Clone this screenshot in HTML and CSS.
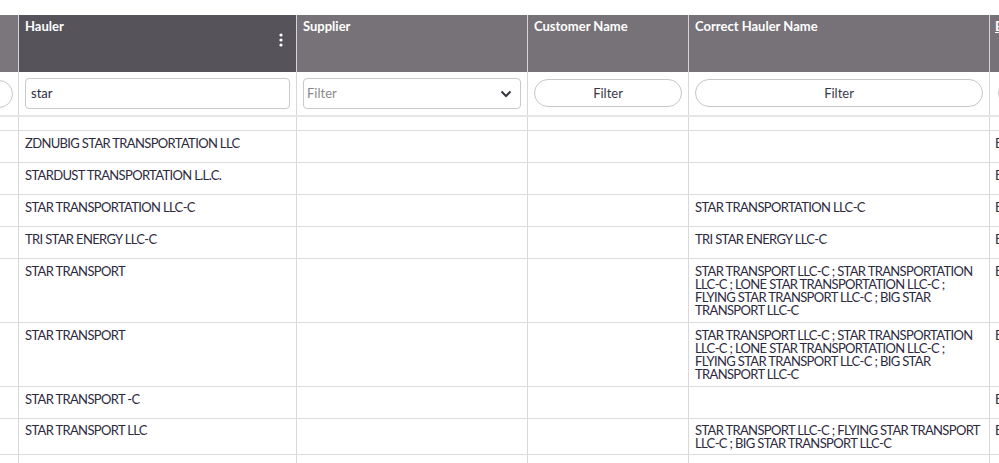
FILE: index.html
```html
<!DOCTYPE html>
<html>
<head>
<meta charset="utf-8">
<link rel="stylesheet" href="styles.css">
</head>
<body>
<div class="grid">
  <div class="row head">
    <div class="cell c0"></div>
    <div class="cell c1 active"><span>Hauler</span>
      <svg class="menu" width="4" height="14" viewBox="0 0 4 14"><circle cx="2" cy="2" r="1.6" fill="#fff"/><circle cx="2" cy="7" r="1.6" fill="#fff"/><circle cx="2" cy="12" r="1.6" fill="#fff"/></svg>
    </div>
    <div class="cell c2">Supplier</div>
    <div class="cell c3">Customer Name</div>
    <div class="cell c4">Correct Hauler Name</div>
    <div class="cell c5"><span class="clip">E</span></div>
  </div>
  <div class="row filters">
    <div class="cell c0"><div class="pill pill-left"></div></div>
    <div class="cell c1"><div class="input">star</div></div>
    <div class="cell c2"><div class="select"><span>Filter</span>
      <svg width="12" height="8" viewBox="0 0 12 8"><path d="M1.5 1.5 L6 6 L10.5 1.5" fill="none" stroke="#3a3640" stroke-width="2"/></svg></div></div>
    <div class="cell c3"><div class="pill">Filter</div></div>
    <div class="cell c4"><div class="pill">Filter</div></div>
    <div class="cell c5"><div class="pill pill-right"></div></div>
  </div>
  <div class="band"></div>
  <div class="row spacer">
    <div class="cell c0"></div><div class="cell c1"></div><div class="cell c2"></div><div class="cell c3"></div><div class="cell c4"></div><div class="cell c5"></div>
  </div>
  <div class="row body">
    <div class="cell c0"></div><div class="cell c1">ZDNUBIG STAR TRANSPORTATION LLC</div><div class="cell c2"></div><div class="cell c3"></div><div class="cell c4"></div><div class="cell c5">E</div>
  </div>
  <div class="row body">
    <div class="cell c0"></div><div class="cell c1">STARDUST TRANSPORTATION L.L.C.</div><div class="cell c2"></div><div class="cell c3"></div><div class="cell c4"></div><div class="cell c5">E</div>
  </div>
  <div class="row body">
    <div class="cell c0"></div><div class="cell c1">STAR TRANSPORTATION LLC-C</div><div class="cell c2"></div><div class="cell c3"></div><div class="cell c4">STAR TRANSPORTATION LLC-C</div><div class="cell c5">E</div>
  </div>
  <div class="row body">
    <div class="cell c0"></div><div class="cell c1">TRI STAR ENERGY LLC-C</div><div class="cell c2"></div><div class="cell c3"></div><div class="cell c4">TRI STAR ENERGY LLC-C</div><div class="cell c5">E</div>
  </div>
  <div class="row body tall">
    <div class="cell c0"></div><div class="cell c1">STAR TRANSPORT</div><div class="cell c2"></div><div class="cell c3"></div><div class="cell c4">STAR TRANSPORT LLC-C ; STAR TRANSPORTATION LLC-C ; LONE STAR TRANSPORTATION LLC-C ; FLYING STAR TRANSPORT LLC-C ; BIG STAR TRANSPORT LLC-C</div><div class="cell c5">E</div>
  </div>
  <div class="row body tall">
    <div class="cell c0"></div><div class="cell c1">STAR TRANSPORT</div><div class="cell c2"></div><div class="cell c3"></div><div class="cell c4">STAR TRANSPORT LLC-C ; STAR TRANSPORTATION LLC-C ; LONE STAR TRANSPORTATION LLC-C ; FLYING STAR TRANSPORT LLC-C ; BIG STAR TRANSPORT LLC-C</div><div class="cell c5">E</div>
  </div>
  <div class="row body">
    <div class="cell c0"></div><div class="cell c1">STAR TRANSPORT -C</div><div class="cell c2"></div><div class="cell c3"></div><div class="cell c4"></div><div class="cell c5">E</div>
  </div>
  <div class="row body last">
    <div class="cell c0"></div><div class="cell c1">STAR TRANSPORT LLC</div><div class="cell c2"></div><div class="cell c3"></div><div class="cell c4">STAR TRANSPORT LLC-C ; FLYING STAR TRANSPORT LLC-C ; BIG STAR TRANSPORT LLC-C</div><div class="cell c5">E</div>
  </div>
  <div class="row body">
    <div class="cell c0"></div><div class="cell c1"></div><div class="cell c2"></div><div class="cell c3"></div><div class="cell c4"></div><div class="cell c5"></div>
  </div>
</div>
</body>
</html>
```
FILE: styles.css
```css
html, body {
  margin: 0;
  padding: 0;
  background: #fff;
  overflow: hidden;
  width: 999px;
  height: 463px;
}
.grid {
  padding-top: 15px;
  font-family: Lato, "Open Sans", sans-serif;
  font-size: 13px;
  color: #2d2a3e;
  width: 1300px;
}
.row {
  display: flex;
  border-bottom: 1px solid #dcdcdc;
}
.cell {
  box-sizing: border-box;
  border-right: 1px solid #d8d8d8;
  padding: 6px 6px 5px 6px;
  line-height: 13px;
  min-height: 31px;
  flex: none;
  overflow: hidden;
}
.c0 { width: 19px; padding: 0; }
.c1 { width: 278px; }
.c2 { width: 231px; }
.c3 { width: 161px; }
.c4 { width: 301px; }
.c5 { width: 200px; padding-left: 5px; }

.body .cell { letter-spacing: -0.65px; }

.head { border-bottom: none; }
.head .cell {
  background: #767278;
  color: #fff;
  font-weight: 700;
  height: 57px;
  padding-top: 5px;
  border-right: 1px solid #d6d4d8;
  position: relative;
}
.head .c0 { background: #7a767c; }
.head .active { background: #57535b; }
.menu { position: absolute; right: 13px; top: 18px; }
.clip { text-decoration: underline; }

.filters { border-bottom: none; }
.filters .cell {
  height: 43px;
  padding: 6px 6px 0 6px;
}
.filters .c0 { padding: 7px 0 0 0; }
.input, .select {
  box-sizing: border-box;
  height: 31px;
  border: 1px solid #c9c9c9;
  border-radius: 4px;
  padding: 0 5px;
  display: flex;
  align-items: center;
  font-size: 13px;
  color: #2d2a3e;
}
.select {
  justify-content: space-between;
  color: #8a8790;
  padding-left: 3px;
  padding-right: 8px;
}
.pill {
  box-sizing: border-box;
  height: 28px;
  margin-top: 1px;
  border: 1px solid #c6c6c6;
  border-radius: 14px;
  display: flex;
  align-items: center;
  justify-content: center;
  font-size: 13px;
  color: #3a3745;
}
.pill-left { margin-left: -30px; width: 43px; }
.pill-right { width: 120px; margin-left: 1px; }
.filters .c5 { padding-left: 7px; }

.band { height: 2px; background: #e6e6e6; }
.spacer .cell { min-height: 13px; height: 13px; padding: 0; }
.row.tall .cell { min-height: 63px; }
.row.last .cell { padding-top: 5px; padding-bottom: 4px; }
```
